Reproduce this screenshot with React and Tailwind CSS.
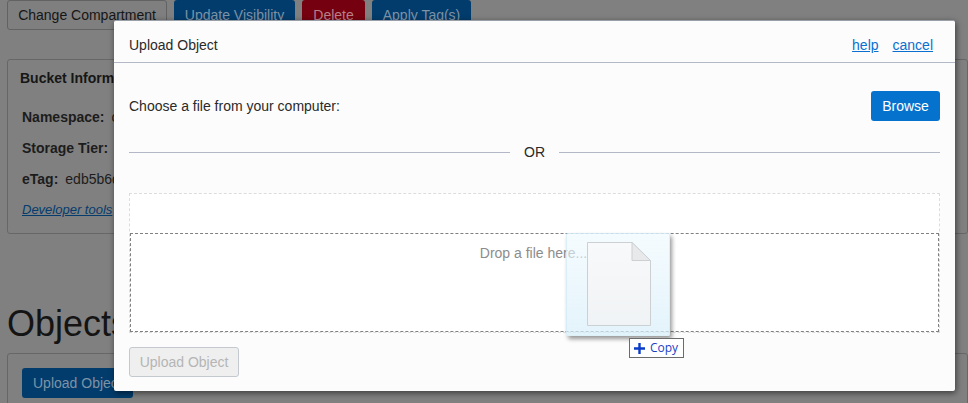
import React from "react";

function BgButton({ children, className }) {
  return (
    <div className={"h-[30px] rounded-[3px] flex items-center justify-center text-[14px] leading-none whitespace-nowrap " + className}>
      {children}
    </div>
  );
}

function Info({ label, value }) {
  return (
    <div className="flex gap-[7px] text-[14px] h-[18px] items-center whitespace-nowrap text-[#1c1c1c]">
      <b>{label}</b>
      <span>{value}</span>
    </div>
  );
}

function Background() {
  return (
    <div className="h-[403px] overflow-hidden bg-[#808080] pl-[7px] text-[#161616]">
      <div className="flex gap-[7px] h-[30px]">
        <BgButton className="border border-[#626262] text-[#161616] w-[160px] bg-[#7f7f7f]">Change Compartment</BgButton>
        <BgButton className="bg-[#023c6c] text-[#7d93a7] w-[121px]">Update Visibility</BgButton>
        <BgButton className="bg-[#75000f] text-[#b8808a] w-[63px]">Delete</BgButton>
        <BgButton className="bg-[#023c6c] text-[#7d93a7] w-[99px]">Apply Tag(s)</BgButton>
      </div>
      <div className="mt-[29px] h-[175px] border border-[#676767] rounded-[3px] pl-[12px] pt-[9px]">
        <div className="font-bold text-[14px] h-[18px] leading-[18px] text-[#161616]">Bucket Information</div>
        <div className="pl-[2px] mt-[21px] flex flex-col gap-[13px]">
          <Info label="Namespace:" value="oci" />
          <Info label="Storage Tier:" value="Standard" />
          <Info label="eTag:" value="edb5b6d0" />
          <div className="italic underline text-[13px] text-[#043c6d] h-[16px] leading-[16px] mt-[1px]">Developer tools</div>
        </div>
      </div>
      <div className="mt-[70px] text-[36px] leading-[40px] text-[#141414]">Objects</div>
      <div className="mt-[9px] h-[60px] border border-[#676767] rounded-[3px] pl-[14px] pt-[14px]">
        <div className="w-[111px] h-[30px] rounded-[3px] bg-[#023c6c] text-[#7d93a7] text-[14px] pl-[11px] flex items-center whitespace-nowrap">Upload Object</div>
      </div>
    </div>
  );
}

function DragGhost() {
  return (
    <div className="absolute left-[566px] top-[233px] w-[105px] h-[103px] pointer-events-none">
      <div className="w-[104px] h-[103px] rounded-[2px] border border-[#cfe8f3]/60 bg-gradient-to-b from-[#eef9fe]/60 to-[#d8effa]/70 shadow-[2px_3px_4px_rgba(0,0,0,0.4)] pl-[20px] pt-[8px]">
        <svg width="64" height="84" viewBox="0 0 64 84" className="block">
          <defs>
            <linearGradient id="paper" x1="0" y1="0" x2="0" y2="1">
              <stop offset="0" stopColor="#f8f9fa" />
              <stop offset="1" stopColor="#f0f3f5" />
            </linearGradient>
          </defs>
          <path d="M0.5 0.5H45L63.5 18.5V83.5H0.5Z" fill="url(#paper)" stroke="#ccd0d3" />
          <path d="M45 0.5V18.5H63.5Z" fill="#e8e9ea" stroke="#ccd0d3" />
        </svg>
      </div>
      <div className="absolute left-[63px] top-[105px] w-[55px] h-[20px] bg-white border border-[#6b6b6b] flex items-center pl-[4px] gap-[5px] text-[12px] leading-none text-[#1a3fc4] font-['Open_Sans',sans-serif]">
        <svg width="11" height="11" viewBox="0 0 11 11" className="block shrink-0">
          <path d="M4.3 0H6.7V4.3H11V6.7H6.7V11H4.3V6.7H0V4.3H4.3Z" fill="#0b3cc8" />
        </svg>
        <span>Copy</span>
      </div>
    </div>
  );
}

function Modal() {
  return (
    <div className="absolute left-[114px] top-[20px] w-[841px] h-[371px] bg-[#fcfcfc] border-t border-[#9aa0a8] rounded-[2px] shadow-[1px_2px_6px_rgba(0,0,0,0.55)] flex flex-col text-[14px] text-[#2a2a2a]">
      <div className="h-[42px] shrink-0 border-b border-[#b2b8c6] flex items-center justify-between pl-[15px] pr-[22px] pt-[7px]">
        <span>Upload Object</span>
        <div className="flex gap-[14px]">
          <a className="underline text-[#0a70cf]">help</a>
          <a className="underline text-[#0a70cf]">cancel</a>
        </div>
      </div>
      <div className="flex-1 flex flex-col pl-[15px] pr-[15px]">
        <div className="mt-[28px] h-[30px] flex items-center justify-between">
          <span>Choose a file from your computer:</span>
          <div className="w-[69px] h-[30px] rounded-[3px] bg-[#0572ce] text-white flex items-center justify-center">Browse</div>
        </div>
        <div className="mt-[16px] h-[30px] flex items-center">
          <div className="flex-1 h-px bg-[#b2b8c6]"></div>
          <span className="w-[49px] text-center">OR</span>
          <div className="flex-1 h-px bg-[#b2b8c6]"></div>
        </div>
        <div className="mt-[26px] h-[140px] bg-white border border-dashed border-[#dcdcdc] pt-[39px]">
          <div className="h-[99px] border border-dashed border-[#808080] flex justify-center pt-[11px] text-[#8c8c8c]">
            <span className="leading-[16px] mr-[2px]">Drop a file here...</span>
          </div>
        </div>
        <div className="mt-[14px] w-[110px] h-[30px] rounded-[3px] border border-[#c4c8cf] bg-[#efefef] text-[#b5b5b5] flex items-center justify-center">Upload Object</div>
      </div>
    </div>
  );
}

export default function App() {
  return (
    <div className="relative w-[968px] h-[403px] overflow-hidden font-['Liberation_Sans',Arial,sans-serif]">
      <Background />
      <Modal />
      <DragGhost />
    </div>
  );
}
